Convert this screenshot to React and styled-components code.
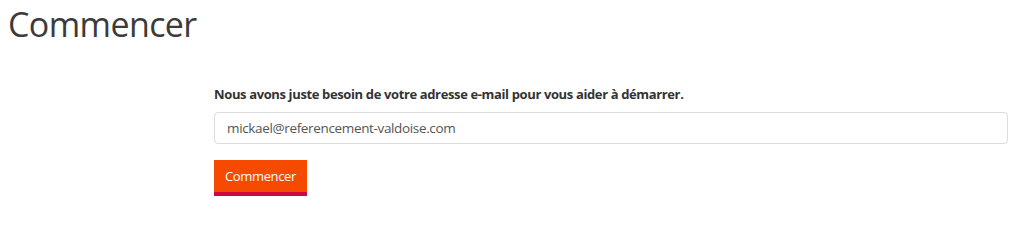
import React from "react";
import styled, { createGlobalStyle } from "styled-components";

const GlobalStyle = createGlobalStyle`
  html, body {
    margin: 0;
    padding: 0;
    background: #fff;
  }
  body {
    font-family: "Open Sans", "Noto Sans", sans-serif;
    color: #333;
  }
`;

const Page = styled.div`
  width: 1024px;
  height: 201px;
  overflow: hidden;
  padding: 0 16px 0 8px;
  box-sizing: border-box;
`;

const Title = styled.h1`
  margin: 0;
  padding-top: 2px;
  font-size: 34px;
  line-height: 44px;
  font-weight: 500;
  color: #3b3b3b;
  letter-spacing: -0.6px;
`;

const Form = styled.form`
  margin: 39px 0 0 206px;
  display: flex;
  flex-direction: column;
  align-items: flex-start;
`;

const Label = styled.label`
  font-size: 13px;
  line-height: 18px;
  font-weight: 700;
  color: #333;
  letter-spacing: -0.37px;
`;

const Input = styled.input`
  box-sizing: border-box;
  margin-top: 9px;
  width: 794px;
  height: 32px;
  padding: 0 12px;
  border: 1px solid #dcdcdc;
  border-radius: 4px;
  font-family: inherit;
  font-size: 13.5px;
  letter-spacing: -0.35px;
  color: #555;
  outline: none;
`;

const Button = styled.button`
  box-sizing: border-box;
  margin-top: 16px;
  width: 93px;
  height: 36px;
  padding: 0;
  border: none;
  border-bottom: 4px solid #cc0a3f;
  background: #f54a00;
  color: #fff;
  font-family: inherit;
  font-size: 13px;
  letter-spacing: -0.35px;
  cursor: pointer;
`;

export default function App() {
  return (
    <Page>
      <GlobalStyle />
      <Title>Commencer</Title>
      <Form onSubmit={(e) => e.preventDefault()}>
        <Label htmlFor="email">
          Nous avons juste besoin de votre adresse e-mail pour vous aider à démarrer.
        </Label>
        <Input id="email" type="email" defaultValue="mickael@referencement-valdoise.com" />
        <Button type="submit">Commencer</Button>
      </Form>
    </Page>
  );
}
